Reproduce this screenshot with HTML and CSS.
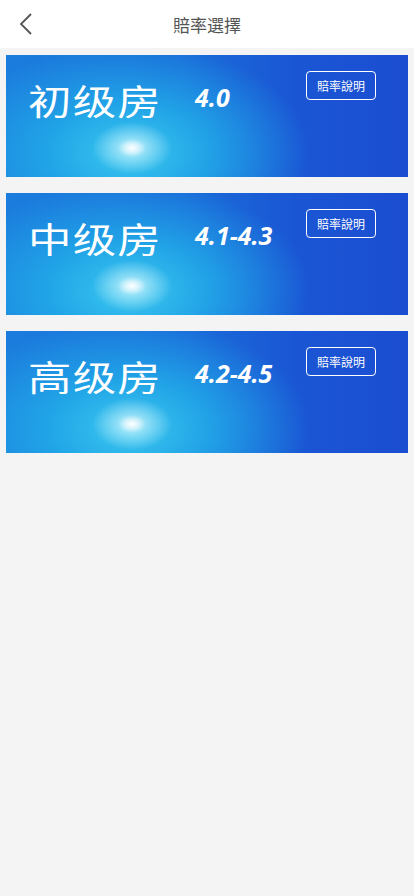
FILE: index.html
```html
<!DOCTYPE html>
<html lang="zh">
<head>
<meta charset="utf-8">
<link rel="stylesheet" href="styles.css">
</head>
<body>
<header class="bar">
  <span class="back"><svg width="14" height="22" viewBox="0 0 14 22"><path d="M12 1 L2 11 L12 21" fill="none" stroke="#555" stroke-width="1.8"/></svg></span>
  <h1 class="title">賠率選擇</h1>
</header>
<main class="list">
  <div class="card">
    <div class="info"><span class="name">初级房</span><span class="odds">4.0</span></div>
    <span class="btn">賠率說明</span>
  </div>
  <div class="card">
    <div class="info"><span class="name">中级房</span><span class="odds">4.1-4.3</span></div>
    <span class="btn">賠率說明</span>
  </div>
  <div class="card">
    <div class="info"><span class="name">高级房</span><span class="odds">4.2-4.5</span></div>
    <span class="btn">賠率說明</span>
  </div>
</main>
</body>
</html>
```
FILE: styles.css
```css
html, body { margin: 0; padding: 0; }
body {
  background: #f4f4f4;
  font-family: "Noto Sans CJK SC", "Noto Sans", sans-serif;
  width: 414px;
  min-height: 896px;
}
.bar {
  height: 48px;
  background: #fff;
  display: flex;
  align-items: center;
  justify-content: center;
  position: relative;
}
.back {
  position: absolute;
  left: 19px;
  top: 13px;
  display: flex;
}
.title {
  margin: 0;
  font-size: 17px;
  font-weight: 400;
  color: #555;
}
.list {
  padding: 7px 6px 0;
  display: flex;
  flex-direction: column;
  gap: 16px;
}
.card {
  height: 122px;
  display: flex;
  justify-content: space-between;
  align-items: flex-start;
  padding: 16px 32px 0 22px;
  box-sizing: border-box;
  background:
    radial-gradient(ellipse 14px 9px at 126px 93px, rgba(255,255,255,0.95), rgba(255,255,255,0) 100%),
    radial-gradient(ellipse 40px 26px at 126px 93px, rgba(220,248,255,0.85), rgba(150,230,250,0) 100%),
    radial-gradient(ellipse 180px 110px at 124px 98px, rgba(60,205,240,0.95), rgba(35,180,235,0.75) 45%, rgba(30,140,228,0) 100%),
    linear-gradient(90deg, #1b7ddd 0%, #1a6cd9 45%, #1a56d4 72%, #1b4dd1 100%);
}
.info {
  display: flex;
  align-items: center;
  padding-top: 9px;
}
.name {
  display: inline-block;
  width: 167px;
  color: #fff;
  font-size: 35px;
  line-height: 40px;
  font-weight: 400;
  letter-spacing: 1px;
  transform: scaleX(1.24);
  transform-origin: left center;
}
.odds {
  color: #fff;
  font-family: "Open Sans", "Noto Sans", sans-serif;
  font-weight: 700;
  font-style: italic;
  font-size: 25px;
  letter-spacing: 0;
  margin-top: -6px;
}
.btn {
  border: 1px solid #fff;
  border-radius: 4px;
  color: #fff;
  font-size: 12px;
  line-height: 27px;
  padding: 0 10px;
}
```
